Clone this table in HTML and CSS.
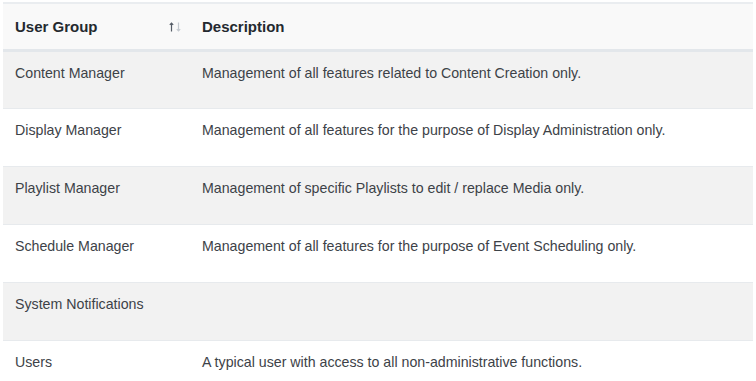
FILE: index.html
```html
<!DOCTYPE html>
<html lang="en">
<head>
<meta charset="utf-8">
<title>User Groups</title>
<link rel="stylesheet" href="styles.css">
</head>
<body>
<table class="grid">
  <colgroup>
    <col class="col-group">
    <col class="col-desc">
  </colgroup>
  <thead>
    <tr>
      <th>
        <div class="th-inner">
          <span>User Group</span>
          <svg class="sort" width="12" height="10" viewBox="0 0 12 10" aria-hidden="true">
            <g fill="none" stroke-width="1.2">
              <path d="M2.5 9.5V1M0.8 2.8L2.5 1l1.7 1.8" stroke="#555c66"/>
              <path d="M9.5 0.5V9M7.8 7.2L9.5 9l1.7-1.8" stroke="#c4c9cf"/>
            </g>
          </svg>
        </div>
      </th>
      <th>Description</th>
    </tr>
  </thead>
  <tbody>
    <tr class="odd"><td>Content Manager</td><td>Management of all features related to Content Creation only.</td></tr>
    <tr><td>Display Manager</td><td>Management of all features for the purpose of Display Administration only.</td></tr>
    <tr class="odd"><td>Playlist Manager</td><td>Management of specific Playlists to edit / replace Media only.</td></tr>
    <tr><td>Schedule Manager</td><td>Management of all features for the purpose of Event Scheduling only.</td></tr>
    <tr class="odd"><td>System Notifications</td><td></td></tr>
    <tr><td>Users</td><td>A typical user with access to all non-administrative functions.</td></tr>
  </tbody>
</table>
</body>
</html>
```
FILE: styles.css
```css
html, body {
  margin: 0;
  background: #ffffff;
}
body {
  padding: 2px 3px 0 3px;
  font-family: "Liberation Sans", Arial, sans-serif;
  color: #3a3f45;
}
.grid {
  width: 750px;
  border-collapse: collapse;
  table-layout: fixed;
  border-top: 2px solid #eaedf0;
}
.col-group { width: 187px; }
.grid th {
  background: #f9f9f9;
  text-align: left;
  font-weight: bold;
  font-size: 15px;
  line-height: 20px;
  color: #24292f;
  padding: 13px 12px 12px 12px;
  border-bottom: 3px solid #e3e7eb;
  vertical-align: top;
}
.grid th:first-child {
  padding-right: 9px;
}
.th-inner {
  display: flex;
  justify-content: space-between;
  align-items: center;
}
.sort {
  display: block;
}
.grid td {
  font-size: 14.2px;
  line-height: 18px;
  height: 58px;
  box-sizing: border-box;
  padding: 12px 12px 0 12px;
  vertical-align: top;
  border-bottom: 1px solid #e7eaed;
  color: #3d4248;
}
.grid tr.odd td {
  background: #f2f2f2;
}
```
